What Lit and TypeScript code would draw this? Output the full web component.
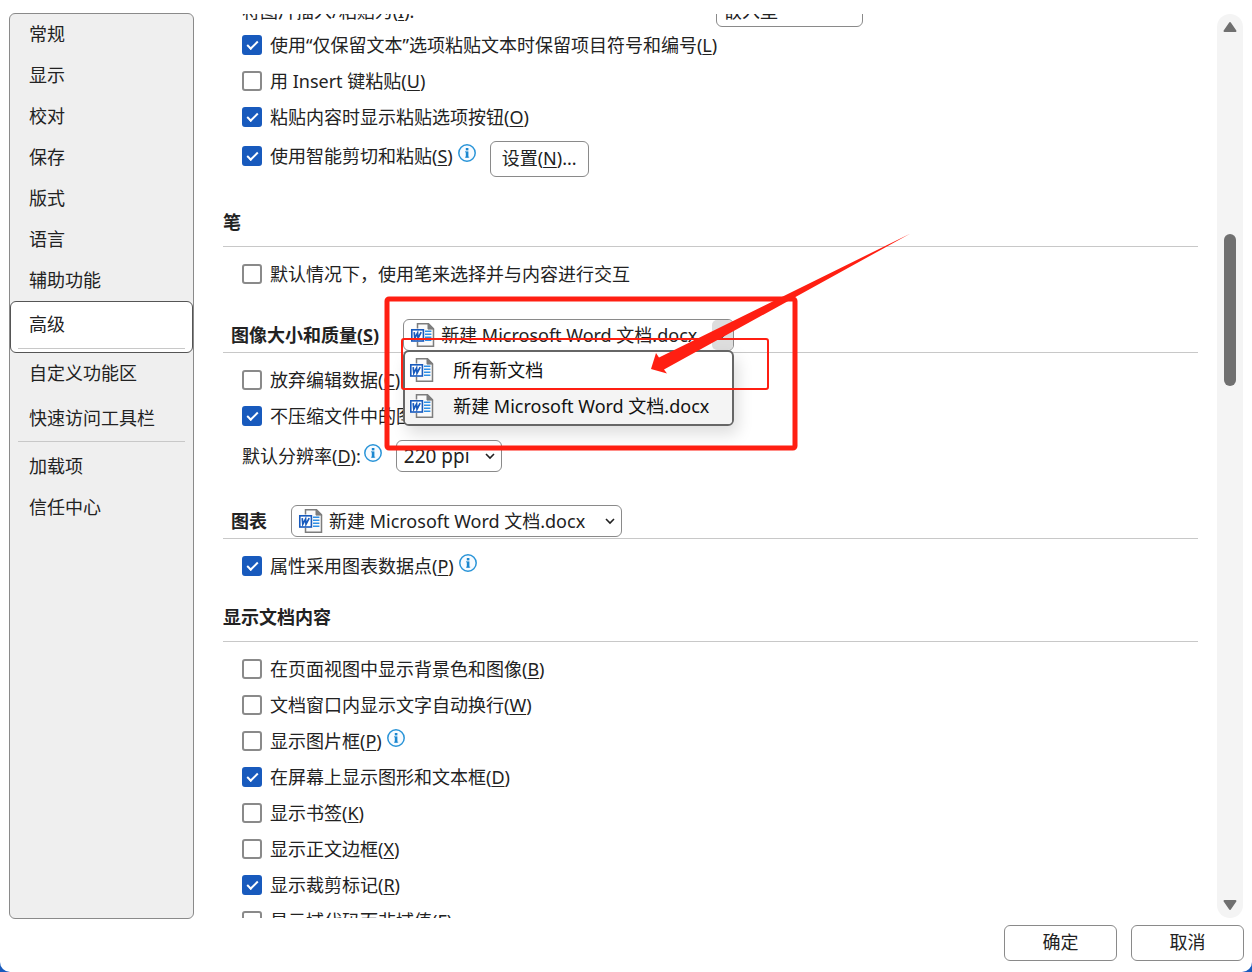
import { LitElement, html, css, svg, nothing } from "lit";
import { customElement, property } from "lit/decorators.js";

const FONT = css`"Noto Sans", "Noto Sans CJK SC", sans-serif`;

const infoIcon = html`<svg class="info" width="20" height="20" viewBox="0 0 20 20" role="img" aria-label="信息">
  <circle cx="10" cy="10" r="8.2" fill="#f7fbff" stroke="#2b95d8" stroke-width="1.5" />
  <rect x="8.8" y="5" width="2.6" height="2.4" fill="#1b87cf" />
  <rect x="8.8" y="8.4" width="2.6" height="6.2" fill="#1b87cf" />
  <path d="M8 8.8h1M8 14.2h4.2" stroke="#1b87cf" stroke-width="0.8" />
</svg>`;

const wordIcon = html`<svg class="word" width="26" height="26" viewBox="0 0 26 26" aria-hidden="true">
  <path d="M7.5 1.7h11l5 5v17.6h-16z" fill="#fafafa" stroke="#7d7d7d" stroke-width="1.5" />
  <path d="M18 1.5v5.6h5.6z" fill="#7d7d7d" stroke="#7d7d7d" />
  <path d="M15 9.2h6.4M15 12.2h6.4M15 15.2h6.4M15 18.2h6.4" stroke="#2f8fe6" stroke-width="1.5" />
  <rect x="0.5" y="6.5" width="14" height="13.4" fill="#fafafa" />
  <rect x="1.8" y="7.8" width="11.6" height="11.2" fill="#fff" stroke="#185abd" stroke-width="1.6" />
  <path d="M4.2 10.2l.6 6 2.8-5.2.4 5.2 3.2-6" fill="none" stroke="#185abd" stroke-width="1.7" />
</svg>`;

const chevron = html`<svg class="chevron" width="12" height="8" viewBox="0 0 12 8" aria-hidden="true">
  <path d="M2 2l4 4 4-4" fill="none" stroke="#222" stroke-width="1.6" />
</svg>`;

const keyed = (text: string, key?: string, tail = "") =>
  key ? html`${text}(<u>${key}</u>)${tail}` : html`${text}${tail}`;

@customElement("option-check")
class OptionCheck extends LitElement {
  @property() text = "";
  @property() key = "";
  @property({ type: Boolean }) checked = false;
  @property({ type: Boolean }) info = false;

  static styles = css`
    :host { display: flex; align-items: center; height: 36px; }
    label { display: flex; align-items: center; gap: 8px; white-space: nowrap; }
    u { text-underline-offset: 2px; text-decoration-thickness: 1px; }
    input {
      appearance: none; flex: none; width: 20px; height: 20px; margin: 0;
      border: 2px solid #8a8a8a; border-radius: 3px; background: #fff;
      display: grid; place-items: center;
    }
    input:checked { background: #185abd; border-color: #185abd; }
    input:checked::before {
      content: ""; width: 11px; height: 6px; margin-bottom: 3px; box-sizing: border-box;
      border: solid #fff; border-width: 0 0 2px 2px; transform: rotate(-45deg);
    }
    .info { margin: 0 0 6px 4px; }
  `;

  render() {
    return html`<label><input type="checkbox" .checked=${this.checked} /><span>${keyed(this.text, this.key)}</span></label>
      ${this.info ? infoIcon : nothing}`;
  }
}

@customElement("scroll-track")
class ScrollTrack extends LitElement {
  static styles = css`
    :host { display: flex; flex-direction: column; align-items: center; width: 26px; margin: 1px 1px 1px 0; border-radius: 13px; background: #f4f4f4; }
    button { border: 0; background: none; padding: 0; height: 26px; width: 26px; display: grid; place-items: center; }
    .before { flex: 194; }
    .thumb { flex: 152; width: 12px; border-radius: 6px; background: #707070; }
    .after { flex: 506; }
  `;

  render() {
    const arrow = (d: string) => html`<svg width="16" height="12" viewBox="0 0 16 12">
      ${svg`<path d=${d} fill="#707070" stroke="#707070" stroke-width="2" stroke-linejoin="round" />`}
    </svg>`;
    return html`<button aria-label="向上滚动">${arrow("M8 2L13.5 10H2.5Z")}</button>
      <div class="before"></div><div class="thumb"></div><div class="after"></div>
      <button aria-label="向下滚动">${arrow("M8 10L13.5 2H2.5Z")}</button>`;
  }
}

const DOC = "新建 Microsoft Word 文档.docx";

@customElement("app-root")
class AppRoot extends LitElement {
  static styles = css`
    :host {
      display: block; height: 100vh; background: #185abd; color: #222;
      font-family: ${FONT}; font-size: 18px; line-height: 24px;
    }
    * { box-sizing: border-box; }
    button, select { font: inherit; color: inherit; }
    u { text-underline-offset: 2px; text-decoration-thickness: 1px; }
    .dialog {
      height: 100%; display: flex; flex-direction: column; background: #fff;
      border-radius: 0 0 10px 10px; padding: 13px 8px 11px 9px;
    }
    .body { flex: 1; min-height: 0; display: flex; }

    .nav { flex: none; width: 185px; border: 1px solid #8a8a8a; border-radius: 6px; background: #efefef; }
    .nav ul { list-style: none; margin: 0; padding: 0; }
    .nav button { display: block; width: 100%; height: 41px; padding: 0 0 2px 19px; border: 0; background: none; text-align: left; }
    .nav hr { margin: 2px 8px 4px; border: 0; border-top: 1px solid #c8c8c8; }
    .nav .selected { background: #fff; border: 1px solid #555; border-radius: 6px; }
    .nav .selected button { height: 45px; padding-left: 18px; }
    .nav .selected hr { margin: 1px 7px 3px; }
    .nav .spaced { margin-top: 4px; }

    .pane { flex: 1; min-width: 0; overflow: hidden; margin: 1px 19px 1px 29px; }
    .options { margin-top: -19px; }
    section { margin-top: 8px; }
    .rows { padding: 9px 0 0 19px; }
    h2 { margin: 0; font-size: 18px; line-height: 24px; font-weight: 700; white-space: nowrap; }
    header { height: 50px; display: flex; align-items: center; border-bottom: 1px solid #c8c8c8; }
    .scoped { align-items: flex-end; padding: 0 0 1px 8px; gap: 24px; }
    .scoped h2 { padding-bottom: 4px; }
    .line { display: flex; align-items: center; white-space: nowrap; }
    .paste { padding-left: 19px; }
    .insert { height: 32px; justify-content: space-between; width: 621px; }
    .smart { align-items: flex-start; gap: 13px; padding: 3px 0 12px; }
    .smart button { margin-top: 3px; }
    .pen { padding-bottom: 3px; }
    .resolution { padding: 6px 0 9px; }
    .resolution .info { margin: 0 13px 6px 2px; }

    .push { height: 36px; padding: 0 11px 2px; border: 1px solid #8a8a8a; border-radius: 6px; background: #fff; }
    .combo { position: relative; flex: none; display: flex; }
    .combo select {
      appearance: none; width: 100%; height: 32px; padding: 0 30px 0 7px; margin: 0;
      border: 1px solid #8a8a8a; border-radius: 6px; background: #fff;
    }
    .combo .chevron { position: absolute; right: 6px; top: 12px; }
    .doc { width: 331px; }
    .doc select { padding: 0 28px 0 37px; }
    .doc > .word { position: absolute; left: 7px; top: 3px; }
    .open .drop { position: absolute; right: 1px; top: 1px; width: 21px; height: 30px; border-radius: 5px; background: #ddd; }
    .wide { width: 147px; }
    .ppi { width: 106px; font-size: 19px; }

    .list {
      position: absolute; z-index: 1; left: 0; right: 0; top: 31px; margin: 0; padding: 0;
      list-style: none; border: 2px solid #666; border-radius: 6px; background: #fff;
      overflow: hidden; box-shadow: 4px 8px 16px #0002;
    }
    .list li { display: flex; align-items: center; gap: 18px; height: 36px; padding-left: 4px; white-space: nowrap; color: #111; }
    .list .current { background: #f4f4f4; }
    .marks { position: absolute; z-index: 2; left: -23px; top: -89px; pointer-events: none; }

    footer { display: flex; justify-content: flex-end; gap: 14px; padding-top: 6px; }
    footer .push { width: 113px; }
  `;

  private docSelect(label: string, open = false) {
    return html`<div class="combo doc ${open ? "open" : ""}">
      <select aria-label=${label}><option>${DOC}</option><option>所有新文档</option></select>
      ${wordIcon}
      ${open
        ? html`<span class="drop"></span>${chevron}
            <ul class="list" role="listbox" aria-label=${label}>
              <li role="option">${wordIcon}<span>所有新文档</span></li>
              <li role="option" class="current" aria-selected="true">${wordIcon}<span>${DOC}</span></li>
            </ul>
            <svg class="marks" width="540" height="230" viewBox="0 0 540 230" aria-hidden="true">
              <g fill="none" stroke="#ff1f12">
                <rect x="7" y="69" width="408" height="149" rx="2" stroke-width="5" />
                <rect x="22" y="109" width="366" height="50" rx="2" stroke-width="2" />
              </g>
              <path d="M271 139L276 123L279 127.5L530.5 3.5L284 139.5L287 143.5Z" fill="#ff1f12" />
            </svg>`
        : chevron}
    </div>`;
  }

  render() {
    const item = (t: string) => html`<li><button>${t}</button></li>`;
    return html`<div class="dialog">
      <div class="body">
        <nav class="nav">
          <ul>
            ${["常规", "显示", "校对", "保存", "版式", "语言", "辅助功能"].map(item)}
            <li class="selected"><button aria-current="page">高级</button><hr /></li>
            ${item("自定义功能区")}
            <li class="spaced"><button>快速访问工具栏</button><hr /></li>
            ${["加载项", "信任中心"].map(item)}
          </ul>
        </nav>
        <main class="pane">
          <div class="options">
            <div class="paste">
              <div class="line insert">
                <label for="insert">将图片插入/粘贴为(<u>I</u>):</label>
                <div class="combo wide"><select id="insert"><option>嵌入型</option></select></div>
              </div>
              <option-check text="使用“仅保留文本”选项粘贴文本时保留项目符号和编号" key="L" checked></option-check>
              <option-check text="用 Insert 键粘贴" key="U"></option-check>
              <option-check text="粘贴内容时显示粘贴选项按钮" key="O" checked></option-check>
              <div class="line smart">
                <option-check text="使用智能剪切和粘贴" key="S" checked info></option-check>
                <button class="push">设置(<u>N</u>)...</button>
              </div>
            </div>
            <section>
              <header><h2>笔</h2></header>
              <div class="rows pen">
                <option-check text="默认情况下，使用笔来选择并与内容进行交互"></option-check>
              </div>
            </section>
            <section>
              <header class="scoped"><h2>图像大小和质量(<u>S</u>)</h2>${this.docSelect("图像大小和质量", true)}</header>
              <div class="rows">
                <option-check text="放弃编辑数据" key="C"></option-check>
                <option-check text="不压缩文件中的图像" key="N" checked></option-check>
                <div class="line resolution">
                  <label for="ppi">默认分辨率(<u>D</u>):</label>${infoIcon}
                  <div class="combo ppi"><select id="ppi"><option>220 ppi</option></select>${chevron}</div>
                </div>
              </div>
            </section>
            <section>
              <header class="scoped"><h2>图表</h2>${this.docSelect("图表")}</header>
              <div class="rows">
                <option-check text="属性采用图表数据点" key="P" checked info></option-check>
              </div>
            </section>
            <section>
              <header><h2>显示文档内容</h2></header>
              <div class="rows">
                <option-check text="在页面视图中显示背景色和图像" key="B"></option-check>
                <option-check text="文档窗口内显示文字自动换行" key="W"></option-check>
                <option-check text="显示图片框" key="P" info></option-check>
                <option-check text="在屏幕上显示图形和文本框" key="D" checked></option-check>
                <option-check text="显示书签" key="K"></option-check>
                <option-check text="显示正文边框" key="X"></option-check>
                <option-check text="显示裁剪标记" key="R" checked></option-check>
                <option-check text="显示域代码而非域值" key="F"></option-check>
              </div>
            </section>
          </div>
        </main>
        <scroll-track></scroll-track>
      </div>
      <footer>
        <button class="push">确定</button>
        <button class="push">取消</button>
      </footer>
    </div>`;
  }
}
